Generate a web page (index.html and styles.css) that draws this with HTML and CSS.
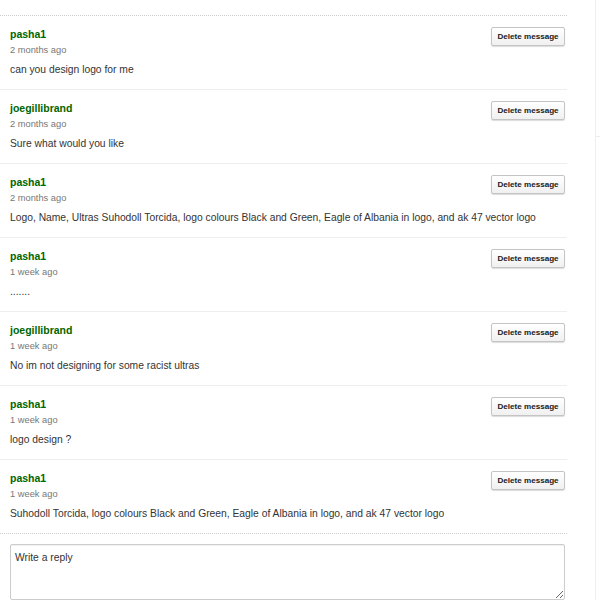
FILE: index.html
```html
<!DOCTYPE html>
<html>
<head>
<meta charset="utf-8">
<link rel="stylesheet" href="styles.css">
</head>
<body>
<div class="page">
  <div class="main">
    <div class="top"></div>
    <div class="msg">
      <div class="user">pasha1</div>
      <button class="del">Delete message</button>
      <div class="date">2 months ago</div>
      <div class="text">can you design logo for me</div>
    </div>
    <div class="msg">
      <div class="user">joegillibrand</div>
      <button class="del">Delete message</button>
      <div class="date">2 months ago</div>
      <div class="text">Sure what would you like</div>
    </div>
    <div class="msg">
      <div class="user">pasha1</div>
      <button class="del">Delete message</button>
      <div class="date">2 months ago</div>
      <div class="text">Logo, Name, Ultras Suhodoll Torcida, logo colours Black and Green, Eagle of Albania in logo, and ak 47 vector logo</div>
    </div>
    <div class="msg">
      <div class="user">pasha1</div>
      <button class="del">Delete message</button>
      <div class="date">1 week ago</div>
      <div class="text">.......</div>
    </div>
    <div class="msg">
      <div class="user">joegillibrand</div>
      <button class="del">Delete message</button>
      <div class="date">1 week ago</div>
      <div class="text">No im not designing for some racist ultras</div>
    </div>
    <div class="msg">
      <div class="user">pasha1</div>
      <button class="del">Delete message</button>
      <div class="date">1 week ago</div>
      <div class="text">logo design ?</div>
    </div>
    <div class="msg last">
      <div class="user">pasha1</div>
      <button class="del">Delete message</button>
      <div class="date">1 week ago</div>
      <div class="text">Suhodoll Torcida, logo colours Black and Green, Eagle of Albania in logo, and ak 47 vector logo</div>
    </div>
    <div class="reply">
      <textarea class="reply-box">Write a reply</textarea>
    </div>
  </div>
  <div class="side">
    <div class="side-block"></div>
  </div>
</div>
</body>
</html>
```
FILE: styles.css
```css
html, body {
  margin: 0;
  padding: 0;
  background: #fff;
  overflow: hidden;
}
body {
  font-family: "Liberation Sans", Arial, sans-serif;
  color: #333;
}
.page {
  display: flex;
  width: 600px;
  height: 600px;
}
.main {
  width: 567px;
  flex: none;
}
.top {
  height: 15px;
  border-bottom: 1px dotted #ccc;
}
.msg {
  display: grid;
  grid-template-columns: 1fr auto;
  grid-template-rows: 14px 16px auto;
  padding: 11px 2px 12px 10px;
  border-bottom: 1px solid #eee;
}
.msg.last {
  border-bottom: 1px dotted #ccc;
}
.user {
  grid-column: 1;
  grid-row: 1;
  font-weight: bold;
  font-size: 10.5px;
  line-height: 14px;
  color: #006600;
}
.date {
  grid-column: 1;
  grid-row: 2;
  margin-top: 2px;
  font-size: 9.3px;
  line-height: 14px;
  color: #777;
}
.text {
  grid-column: 1 / 3;
  grid-row: 3;
  margin-top: 6px;
  font-size: 10.3px;
  line-height: 14px;
  color: #333;
}
.del {
  grid-column: 2;
  grid-row: 1 / 3;
  align-self: start;
  width: 74px;
  height: 19px;
  padding: 0;
  font-family: "Liberation Sans", Arial, sans-serif;
  font-weight: bold;
  font-size: 8.1px;
  color: #1a1a1a;
  background: linear-gradient(#fff, #f0f0f0);
  border: 1px solid #c4c4c4;
  border-radius: 2px;
  box-shadow: 0 1px 1px rgba(0,0,0,0.14);
}
.reply {
  padding: 10px 2px 0 10px;
}
.reply-box {
  display: block;
  box-sizing: border-box;
  width: 555px;
  height: 56px;
  padding: 6px 4px;
  margin: 0;
  font-family: "Liberation Sans", Arial, sans-serif;
  font-size: 10.3px;
  line-height: 13px;
  color: #333;
  border: 1px solid #ccc;
  border-radius: 2px;
  box-shadow: inset 0 1px 1px rgba(0,0,0,0.06);
  resize: both;
}
.side {
  margin-left: 28px;
  flex: 1;
  border-left: 1px solid #eee;
}
.side-block {
  height: 136px;
  border-bottom: 1px solid #eee;
}
```
